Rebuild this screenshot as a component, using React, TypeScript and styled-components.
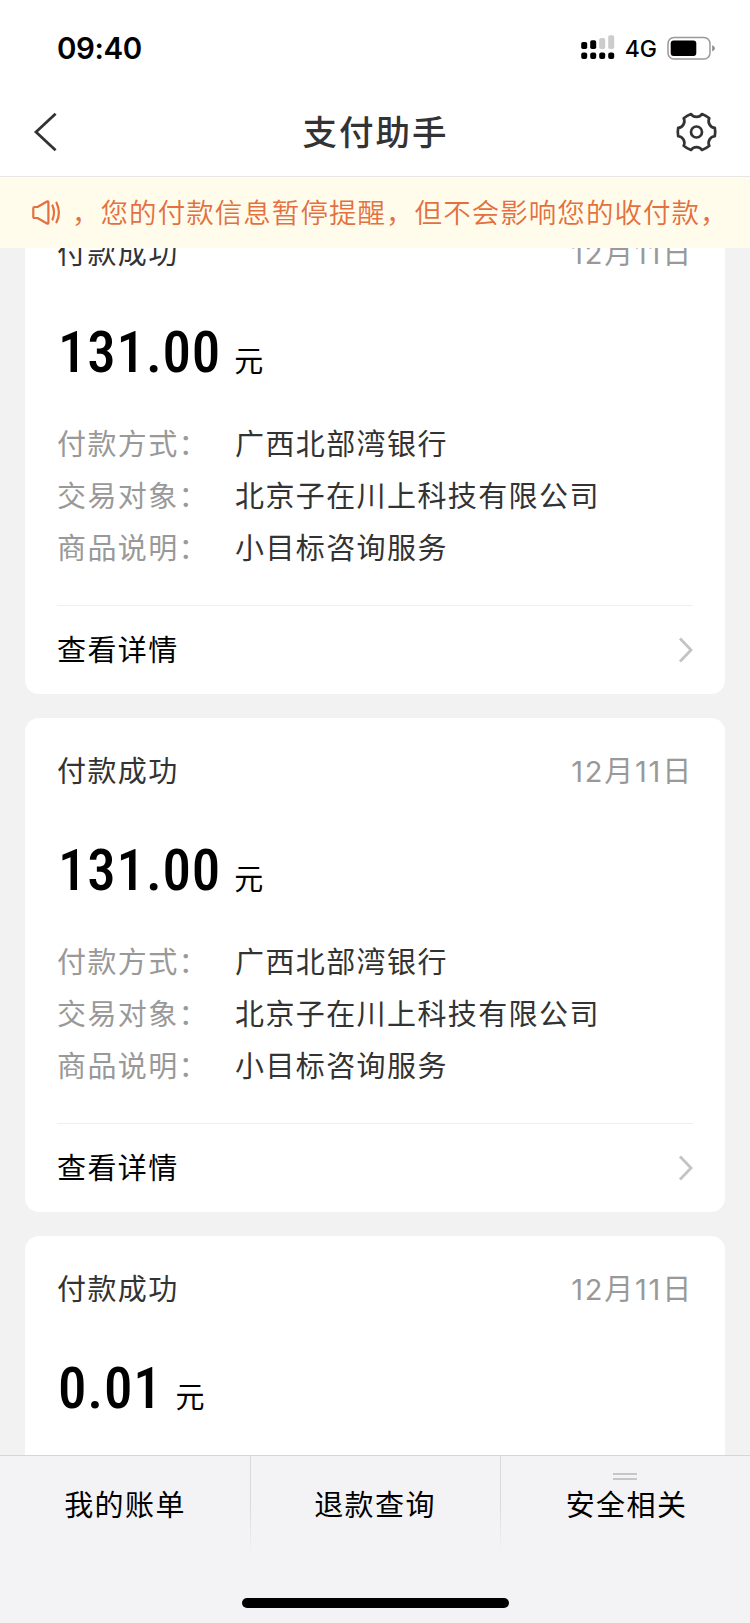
import React from "react";
import styled, { createGlobalStyle } from "styled-components";

const GlobalStyle = createGlobalStyle`
  * { box-sizing: border-box; }
  body {
    margin: 0;
    background: #f2f2f2;
    font-family: Inter, "Noto Sans CJK SC", sans-serif;
    color: #333;
  }
`;

const Screen = styled.div`
  width: 750px;
  height: 1623px;
  display: flex;
  flex-direction: column;
  overflow: hidden;
  background: #f2f2f2;
`;

const StatusBar = styled.div`
  flex: none;
  height: 88px;
  padding: 8px 34px 0 57px;
  display: flex;
  align-items: center;
  justify-content: space-between;
  background: #fff;
  color: #000;
`;

const Time = styled.span`
  font-size: 29.5px;
  font-weight: 600;
  letter-spacing: -0.4px;
`;

const StatusIcons = styled.div`
  display: flex;
  align-items: center;
`;

const Network = styled.span`
  margin: 2px 10px 0;
  font-size: 23px;
  line-height: 26px;
  font-weight: 500;
`;

const NavBar = styled.header`
  flex: none;
  height: 89px;
  padding: 0 33px;
  display: grid;
  grid-template-columns: 42px 1fr 42px;
  align-items: center;
  background: #fff;
  border-bottom: 1px solid #e6e6e4;
`;

const NavTitle = styled.h1`
  margin: 0;
  padding: 0 0 5px 1px;
  text-align: center;
  font-size: 34.5px;
  font-weight: 500;
  letter-spacing: 2px;
  font-family: "Noto Sans CJK SC", sans-serif;
`;

const Notice = styled.div`
  flex: none;
  height: 71px;
  padding: 0 30px 0 32px;
  display: flex;
  align-items: center;
  background: #fffcec;
  color: #e4703f;
`;

const NoticeText = styled.div`
  margin-left: 11px;
  padding-bottom: 4px;
  flex: 1;
  overflow: hidden;
  white-space: nowrap;
  font-family: "Noto Sans CJK SC", sans-serif;
  font-size: 27.5px;
  font-weight: 350;
  letter-spacing: 1.05px;
`;

const Feed = styled.main`
  flex: 1;
  min-height: 0;
  overflow: hidden;
  padding: 0 25px;
`;

const FeedList = styled.div`
  margin-top: -48px;
  display: flex;
  flex-direction: column;
  gap: 24px;
`;

const Card = styled.article`
  flex: none;
  height: 494px;
  padding: 0 32px;
  display: flex;
  flex-direction: column;
  background: #fff;
  border-radius: 14px;
  font-size: 29px;
  line-height: 52px;
  letter-spacing: 1.4px;
`;

const CardHead = styled.div`
  height: 106px;
  padding-top: 2px;
  display: flex;
  align-items: center;
  justify-content: space-between;
`;

const CardDate = styled.time`
  color: #999;
  letter-spacing: 1.8px;
`;

const Amount = styled.div`
  height: 113px;
  padding: 17px 0 0 1px;
  display: flex;
  align-items: baseline;
  color: #000;
`;

const Figure = styled.span`
  font-family: Roboto, sans-serif;
  font-size: 57px;
  font-weight: 500;
  font-stretch: 84%;
  line-height: 60px;
  letter-spacing: 0.8px;
`;

const Unit = styled.span`
  margin-left: 13px;
`;

const Details = styled.dl`
  margin: 0;
  height: 186px;
  display: grid;
  grid-template-columns: 178px 1fr;
  grid-auto-rows: 52px;
`;

const Label = styled.dt`
  color: #999;
`;

const Value = styled.dd`
  margin: 0;
  white-space: nowrap;
`;

const CardFoot = styled.div`
  flex: 1;
  display: flex;
  align-items: center;
  justify-content: space-between;
  border-top: 1px solid #efefef;
  color: #000;
`;

const FootLabel = styled.span`
  padding-top: 2px;
`;

const TabBar = styled.nav`
  flex: none;
  height: 168px;
  display: flex;
  flex-direction: column;
  justify-content: space-between;
  align-items: center;
  background: #f3f3f6;
  border-top: 1px solid #d6d6d8;
`;

const Tabs = styled.div`
  width: 100%;
  display: grid;
  grid-template-columns: repeat(3, 1fr);
`;

const Tab = styled.button`
  position: relative;
  height: 98px;
  padding: 0 0 5px;
  border: 0;
  background: none;
  font: inherit;
  font-size: 29px;
  letter-spacing: 1.4px;
  color: #000;

  &:last-child {
    padding-left: 3px;
  }

  & + &::before {
    content: "";
    position: absolute;
    left: 0;
    top: 0;
    width: 1px;
    height: 98px;
    background: linear-gradient(#dadadc 50%, #f3f3f6);
  }
`;

const Grip = styled.span`
  position: absolute;
  left: 50%;
  top: 17px;
  margin-left: -12px;
  width: 24px;
  height: 7px;
  border: solid #c6c6c9;
  border-width: 2px 0;
`;

const HomeIndicator = styled.div`
  width: 267px;
  height: 10px;
  margin-bottom: 15px;
  border-radius: 5px;
  background: #000;
`;

const SignalIcon = () => (
  <svg width="34" height="26" viewBox="0 0 34 26">
    {[
      [7, 7],
      [5.2, 8.8],
      [3, 11],
      [0.2, 13.8],
    ].map(([y, h], i) => (
      <g key={i}>
        <rect x={0.2 + i * 9} y={y} width="6" height={h} rx="1.8" fill={i < 2 ? "#000" : "#ccc"} />
        <rect x={0.2 + i * 9} y="17.6" width="6" height="6.4" rx="2" fill="#000" />
      </g>
    ))}
  </svg>
);

const BatteryIcon = () => (
  <svg width="49" height="24" viewBox="0 0 49 24">
    <rect x="1" y="1.5" width="42" height="21.5" rx="6" fill="none" stroke="#999" strokeWidth="1.5" />
    <rect x="3.7" y="4.4" width="25.6" height="15.7" rx="3" fill="#000" />
    <path d="M45.200 9.200v6.200c1.500-.5 2.600-1.700 2.600-3.100s-1.100-2.600-2.600-3.100z" fill="#8c8c8c" />
  </svg>
);

const BackIcon = () => (
  <svg width="26" height="42" viewBox="0 0 26 42" fill="none" stroke="#333" strokeWidth="2.8">
    <path d="M22.600 2.700 3 21 22.600 39.300" />
  </svg>
);

const polar = (r: number, deg: number) => {
  const a = (deg * Math.PI) / 180;
  return `${(r * Math.cos(a)).toFixed(2)} ${(r * Math.sin(a)).toFixed(2)}`;
};

// Six rounded teeth, 60 degrees apart, joined by concave notches.
const gearPath =
  `M${polar(18.8, -13)}` +
  [0, 60, 120, 180, 240, 300]
    .map((t) => `Q${polar(19.1, t)} ${polar(18.8, t + 13)}C${polar(14.4, t + 18)} ${polar(14.4, t + 42)} ${polar(18.8, t + 47)}`)
    .join("") +
  "Z";

const GearIcon = () => (
  <svg width="42" height="42" viewBox="-21.500 -21 42 42" fill="none" stroke="#333" strokeWidth="2.7" strokeLinejoin="round">
    <path d={gearPath} />
    <circle r="5.5" />
  </svg>
);

const SpeakerIcon = () => (
  <svg width="29" height="28" viewBox="0 0 29 28" fill="none" stroke="#e4703f" strokeWidth="2.2" strokeLinecap="round" strokeLinejoin="round">
    <path d="M2.500 8H5.500L15 2.500Q16.400 2 16.400 3.500V23.500Q16.400 25 15 24.500L5.500 19H2.500Q1.300 19 1.300 17.800V9.200Q1.300 8 2.500 8Z" />
    <path d="M20.500 6.500Q23.500 13.500 20.500 20.500" />
    <path d="M24.500 3.700Q29.300 13.500 24.500 23.300" />
  </svg>
);

const ChevronIcon = () => (
  <svg width="16" height="28" viewBox="0 0 16 28" fill="none" stroke="#c4c4c4" strokeWidth="2.8">
    <path d="M3 2.500 14 14 3 25.500" />
  </svg>
);

type Detail = [label: string, value: string];
type Payment = { id: number; amount: string; details?: Detail[] };

const purchase: Detail[] = [
  ["付款方式：", "广西北部湾银行"],
  ["交易对象：", "北京子在川上科技有限公司"],
  ["商品说明：", "小目标咨询服务"],
];

const payments: Payment[] = [
  { id: 1, amount: "131.00", details: purchase },
  { id: 2, amount: "131.00", details: purchase },
  { id: 3, amount: "0.01" },
];

const PaymentCard = ({ amount, details }: Omit<Payment, "id">) => (
  <Card>
    <CardHead>
      <span>付款成功</span>
      <CardDate>12月11日</CardDate>
    </CardHead>
    <Amount>
      <Figure>{amount}</Figure>
      <Unit>元</Unit>
    </Amount>
    {details && (
      <>
        <Details>
          {details.map(([label, value]) => (
            <React.Fragment key={label}>
              <Label>{label}</Label>
              <Value>{value}</Value>
            </React.Fragment>
          ))}
        </Details>
        <CardFoot>
          <FootLabel>查看详情</FootLabel>
          <ChevronIcon />
        </CardFoot>
      </>
    )}
  </Card>
);

export default function App() {
  return (
    <>
      <GlobalStyle />
      <Screen>
        <StatusBar>
          <Time>09:40</Time>
          <StatusIcons>
            <SignalIcon />
            <Network>4G</Network>
            <BatteryIcon />
          </StatusIcons>
        </StatusBar>
        <NavBar>
          <BackIcon />
          <NavTitle>支付助手</NavTitle>
          <GearIcon />
        </NavBar>
        <Notice>
          <SpeakerIcon />
          <NoticeText>，您的付款信息暂停提醒，但不会影响您的收付款，</NoticeText>
        </Notice>
        <Feed>
          <FeedList>
            {payments.map((p) => (
              <PaymentCard key={p.id} amount={p.amount} details={p.details} />
            ))}
          </FeedList>
        </Feed>
        <TabBar>
          <Tabs>
            <Tab>我的账单</Tab>
            <Tab>退款查询</Tab>
            <Tab>
              <Grip />
              安全相关
            </Tab>
          </Tabs>
          <HomeIndicator />
        </TabBar>
      </Screen>
    </>
  );
}
